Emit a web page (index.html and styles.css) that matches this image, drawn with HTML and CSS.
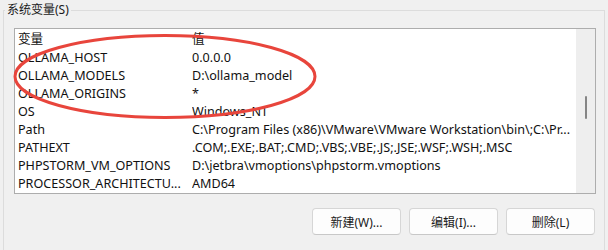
FILE: index.html
```html
<!DOCTYPE html>
<html lang="zh-CN">
<head>
    <meta charset="UTF-8">
    <meta name="viewport" content="width=device-width, initial-scale=1.0">
    <title>系统变量</title>
    <link rel="stylesheet" href="styles.css">
</head>
<body>
    <fieldset class="group">
        <legend>系统变量(S)</legend>

        <div class="listbox">
            <div class="list">
                <div class="row head"><span class="name">变量</span><span class="value">值</span></div>
                <div class="row"><span class="name">OLLAMA_HOST</span><span class="value">0.0.0.0</span></div>
                <div class="row"><span class="name">OLLAMA_MODELS</span><span class="value">D:\ollama_model</span></div>
                <div class="row"><span class="name">OLLAMA_ORIGINS</span><span class="value">*</span></div>
                <div class="row"><span class="name">OS</span><span class="value">Windows_NT</span></div>
                <div class="row"><span class="name">Path</span><span class="value">C:\Program Files (x86)\VMware\VMware Workstation\bin\;C:\Pr...</span></div>
                <div class="row"><span class="name">PATHEXT</span><span class="value">.COM;.EXE;.BAT;.CMD;.VBS;.VBE;.JS;.JSE;.WSF;.WSH;.MSC</span></div>
                <div class="row"><span class="name">PHPSTORM_VM_OPTIONS</span><span class="value">D:\jetbra\vmoptions\phpstorm.vmoptions</span></div>
                <div class="row"><span class="name">PROCESSOR_ARCHITECTU...</span><span class="value">AMD64</span></div>
            </div>
            <div class="scrollbar"><div class="thumb"></div></div>
        </div>

        <div class="buttons">
            <button>新建(W)...</button>
            <button>编辑(I)...</button>
            <button>删除(L)</button>
        </div>
    </fieldset>

    <!-- 红色圈注 -->
    <svg class="mark" width="608" height="250" viewBox="0 0 608 250">
        <ellipse cx="165" cy="76.5" rx="150" ry="41" fill="none" stroke="#e8453c" stroke-width="3"></ellipse>
    </svg>
</body>
</html>
```

FILE: styles.css
```css
* {
    box-sizing: border-box;
    margin: 0;
    padding: 0;
}

html, body {
    width: 608px;
    height: 250px;
    overflow: hidden;
    background-color: #f0f0f0;
    font-family: "Noto Sans", "Noto Sans CJK SC", sans-serif;
    font-size: 12px;
    color: #1a1a1a;
    position: relative;
}

/* 分组框 */
.group {
    margin: 0 3px;
    border: 1px solid #dcdcdc;
    padding: 8px 8px 20px 10px;
    min-width: 0;
}

.group legend {
    margin-left: -9px;
    padding: 0 2px;
    line-height: 20px;
    font-size: 12px;
}

/* 列表 */
.listbox {
    display: flex;
    height: 166px;
    border: 1px solid #adadad;
    background-color: #ffffff;
}

.list {
    flex: 1;
    overflow: hidden;
    padding-left: 3px;
    font-size: 12.6px;
    color: #111111;
}

.row {
    display: flex;
    height: 18px;
    line-height: 18px;
    white-space: nowrap;
}

.row.head {
    height: 20px;
    line-height: 20px;
}

.row .name {
    width: 174px;
    flex-shrink: 0;
}

.row .value {
    overflow: hidden;
}

/* 滚动条 */
.scrollbar {
    width: 19px;
    background-color: #eeeeee;
    display: flex;
    justify-content: center;
    padding-top: 67px;
}

.thumb {
    width: 2px;
    height: 23px;
    border-radius: 1px;
    background-color: #858585;
}

/* 按钮 */
.buttons {
    display: flex;
    justify-content: flex-end;
    gap: 8px;
    margin-top: 14px;
    margin-right: 1px;
}

.buttons button {
    width: 89px;
    height: 27px;
    font-family: inherit;
    font-size: 12px;
    color: #1a1a1a;
    background-color: #fdfdfd;
    border: 1px solid #d6d6d6;
    border-bottom-color: #c8c8c8;
    border-radius: 4px;
}

/* 圈注 */
.mark {
    position: absolute;
    top: 0;
    left: 0;
    pointer-events: none;
}
```
